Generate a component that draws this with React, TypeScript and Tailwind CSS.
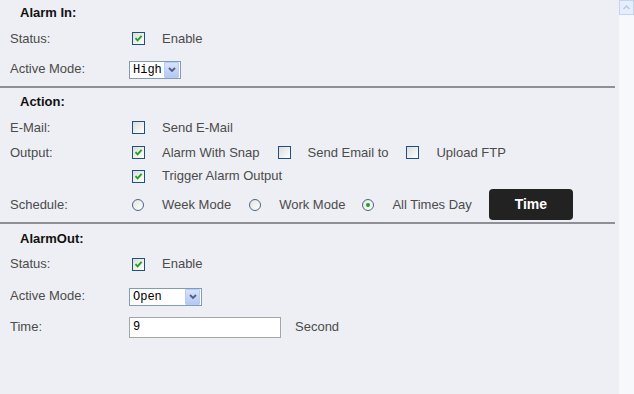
import React from "react";

function Check({ on }: { on?: boolean }) {
  return (
    <span className="relative inline-block w-[13px] h-[13px] border border-[#1c5180] bg-gradient-to-br from-[#dcdcd7] to-white shrink-0">
      {on && (
        <svg className="absolute left-[1px] top-[1px]" width="9" height="9" viewBox="0 0 9 9">
          <path d="M1.5 4.2 L3.6 6.4 L7.6 1.8" stroke="#21a121" strokeWidth="1.8" fill="none" />
        </svg>
      )}
    </span>
  );
}

function Radio({ on }: { on?: boolean }) {
  return (
    <span className="relative inline-flex items-center justify-center w-[12px] h-[12px] rounded-full border border-[#4a6585] bg-gradient-to-br from-[#e4e4e0] to-white shrink-0">
      {on && <span className="w-[4px] h-[4px] rounded-full bg-[#21a121]" />}
    </span>
  );
}

function Select({ value, w }: { value: string; w: string }) {
  return (
    <span className={`inline-flex items-center h-[18px] border border-[#7f9db9] bg-white ${w}`}>
      <span className="flex-1 pl-[3px] text-[12px] leading-none text-black" style={{ fontFamily: '"Liberation Mono", monospace' }}>
        {value}
      </span>
      <span className="w-[15px] h-[16px] mr-[1px] flex items-center justify-center bg-gradient-to-b from-[#d8e3fb] to-[#b4c8f2] border border-[#b8cbf2] rounded-[1px]">
        <svg width="8" height="6" viewBox="0 0 8 6">
          <path d="M1 1 L4 4 L7 1" stroke="#4d6185" strokeWidth="1.8" fill="none" />
        </svg>
      </span>
    </span>
  );
}

const lbl = "w-[132px] pl-[10px] shrink-0";

export default function App() {
  return (
    <div
      className="flex w-[634px] h-[394px] bg-[#eeeff4] text-[13px] text-[#4b4b4b] overflow-hidden"
      style={{ fontFamily: '"Liberation Sans", Arial, sans-serif' }}
    >
      <div className="w-[619px] flex flex-col">
        {/* Alarm In */}
        <div className="h-[25px] flex items-center pl-[20px] font-bold text-[#111]">Alarm In:</div>
        <div className="h-[27px] flex items-center">
          <span className={lbl}>Status:</span>
          <Check on />
          <span className="ml-[17px]">Enable</span>
        </div>
        <div className="h-[34px] flex items-center">
          <span className={lbl}>Active Mode:</span>
          <span className="-ml-[3px]">
            <Select value="High" w="w-[52px]" />
          </span>
        </div>
        <div className="h-[2px] w-[615px] bg-[#8f8f96]" />

        {/* Action */}
        <div className="h-[27px] flex items-center pl-[20px] font-bold text-[#111]">Action:</div>
        <div className="h-[25px] flex items-center">
          <span className={lbl}>E-Mail:</span>
          <Check />
          <span className="ml-[17px]">Send E-Mail</span>
        </div>
        <div className="h-[25px] flex items-center">
          <span className={lbl}>Output:</span>
          <Check on />
          <span className="ml-[17px]">Alarm With Snap</span>
          <span className="ml-[18px] flex"><Check /></span>
          <span className="ml-[17px]">Send Email to</span>
          <span className="ml-[18px] flex"><Check /></span>
          <span className="ml-[17px]">Upload FTP</span>
        </div>
        <div className="h-[22px] flex items-center">
          <span className={lbl}></span>
          <Check on />
          <span className="ml-[17px]">Trigger Alarm Output</span>
        </div>
        <div className="h-[35px] flex items-center">
          <span className={lbl}>Schedule:</span>
          <Radio />
          <span className="ml-[18px]">Week Mode</span>
          <span className="ml-[18px] flex"><Radio /></span>
          <span className="ml-[18px]">Work Mode</span>
          <span className="ml-[17px] flex"><Radio on /></span>
          <span className="ml-[18px]">All Times Day</span>
          <button className="ml-[17px] w-[84px] h-[31px] rounded-[4px] bg-[#222222] text-white font-bold text-[14px]">
            Time
          </button>
        </div>
        <div className="h-[2px] w-[615px] bg-[#8f8f96]" />

        {/* AlarmOut */}
        <div className="h-[29px] flex items-center pl-[20px] font-bold text-[#111]">AlarmOut:</div>
        <div className="h-[22px] flex items-center">
          <span className={lbl}>Status:</span>
          <Check on />
          <span className="ml-[17px]">Enable</span>
        </div>
        <div className="h-[42px] flex items-center">
          <span className={lbl}>Active Mode:</span>
          <span className="-ml-[3px]">
            <Select value="Open" w="w-[73px]" />
          </span>
        </div>
        <div className="h-[20px] flex items-center">
          <span className={lbl}>Time:</span>
          <span
            className="-ml-[3px] w-[152px] h-[21px] border border-[#a5a5a5] bg-white flex items-center pl-[3px] text-[12px] text-black"
            style={{ fontFamily: '"Liberation Mono", monospace' }}
          >
            9
          </span>
          <span className="ml-[14px]">Second</span>
        </div>
      </div>

      {/* scrollbar */}
      <div className="w-[15px] bg-[#f7f8fc] flex flex-col">
        <div className="w-[15px] h-[15px] border border-[#c3d3f5] bg-[#e6edfb] flex items-center justify-center">
          <svg width="7" height="5" viewBox="0 0 7 5">
            <path d="M0.5 4 L3.5 1 L6.5 4" stroke="#b7c6e6" strokeWidth="1.4" fill="none" />
          </svg>
        </div>
      </div>
    </div>
  );
}
